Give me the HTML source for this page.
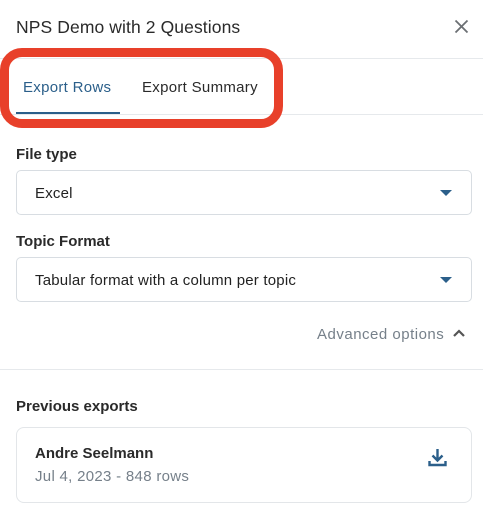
<!DOCTYPE html>
<html><head><style>
body{margin:0;width:483px;height:518px;background:#fff;font-family:"Liberation Sans",sans-serif;position:relative;overflow:hidden;color:#222}
.a{position:absolute}
.line{position:absolute;left:0;width:483px;height:1px;background:#e6e9ec}
.sel{position:absolute;left:16px;width:456px;height:45px;border:1px solid #d8dde2;border-radius:5px;box-sizing:border-box}
.sel span{position:absolute;left:18px;top:14px;font-size:15px;color:#222;letter-spacing:0.2px}
.caret{position:absolute;right:19px;top:19px;width:0;height:0;border-left:6px solid transparent;border-right:6px solid transparent;border-top:6px solid #2b5f8a}
.lbl{position:absolute;left:16px;font-size:15px;font-weight:bold;color:#2a2a2a}
</style></head><body>
<div class="a" style="left:16px;top:17px;font-size:17.5px;color:#2a2a2a;letter-spacing:0.1px">NPS Demo with 2 Questions</div>
<svg class="a" style="left:454px;top:19px" width="15" height="15" viewBox="0 0 15 15"><path d="M1.5 1.5L13.5 13.5M13.5 1.5L1.5 13.5" stroke="#6b6f73" stroke-width="1.8"/></svg>
<div class="line" style="top:58px"></div>
<div class="line" style="top:114px"></div>
<div class="a" style="left:23px;top:79px;font-size:15px;color:#2b5f8a;letter-spacing:0.3px">Export Rows</div>
<div class="a" style="left:142px;top:79px;font-size:15px;color:#2a2a2a;letter-spacing:0.3px">Export Summary</div>
<div class="a" style="left:16px;top:112px;width:104px;height:2px;background:#2b5f8a"></div>
<div class="a" style="left:0px;top:48px;width:265px;height:62px;border:9px solid #e8402a;border-radius:22px"></div>
<div class="lbl" style="top:146px">File type</div>
<div class="sel" style="top:170px"><span>Excel</span><div class="caret"></div></div>
<div class="lbl" style="top:233px">Topic Format</div>
<div class="sel" style="top:257px"><span>Tabular format with a column per topic</span><div class="caret"></div></div>
<div class="a" style="left:317px;top:326px;font-size:15px;color:#76808a;letter-spacing:0.5px">Advanced options</div>
<svg class="a" style="left:452px;top:328px" width="14" height="10" viewBox="0 0 14 10"><path d="M2 8L7 3L12 8" stroke="#555" stroke-width="2.2" fill="none"/></svg>
<div class="line" style="top:369px"></div>
<div class="lbl" style="top:398px">Previous exports</div>
<div class="a" style="left:16px;top:427px;width:456px;height:76px;border:1px solid #e3e6e9;border-radius:8px;box-sizing:border-box"></div>
<div class="a" style="left:35px;top:445px;font-size:15px;font-weight:bold;color:#2a2a2a">Andre Seelmann</div>
<div class="a" style="left:35px;top:468px;font-size:15px;color:#76808a;letter-spacing:0.3px">Jul 4, 2023 - 848 rows</div>
<svg class="a" style="left:427px;top:447px" width="21" height="21" viewBox="0 0 21 21"><path d="M10.5 2V13M5.5 8.5L10.5 13.5L15.5 8.5" stroke="#2b5f8a" stroke-width="2.4" fill="none"/><path d="M2.5 14V18H18.5V14" stroke="#2b5f8a" stroke-width="2.4" fill="none"/></svg>
</body></html>
